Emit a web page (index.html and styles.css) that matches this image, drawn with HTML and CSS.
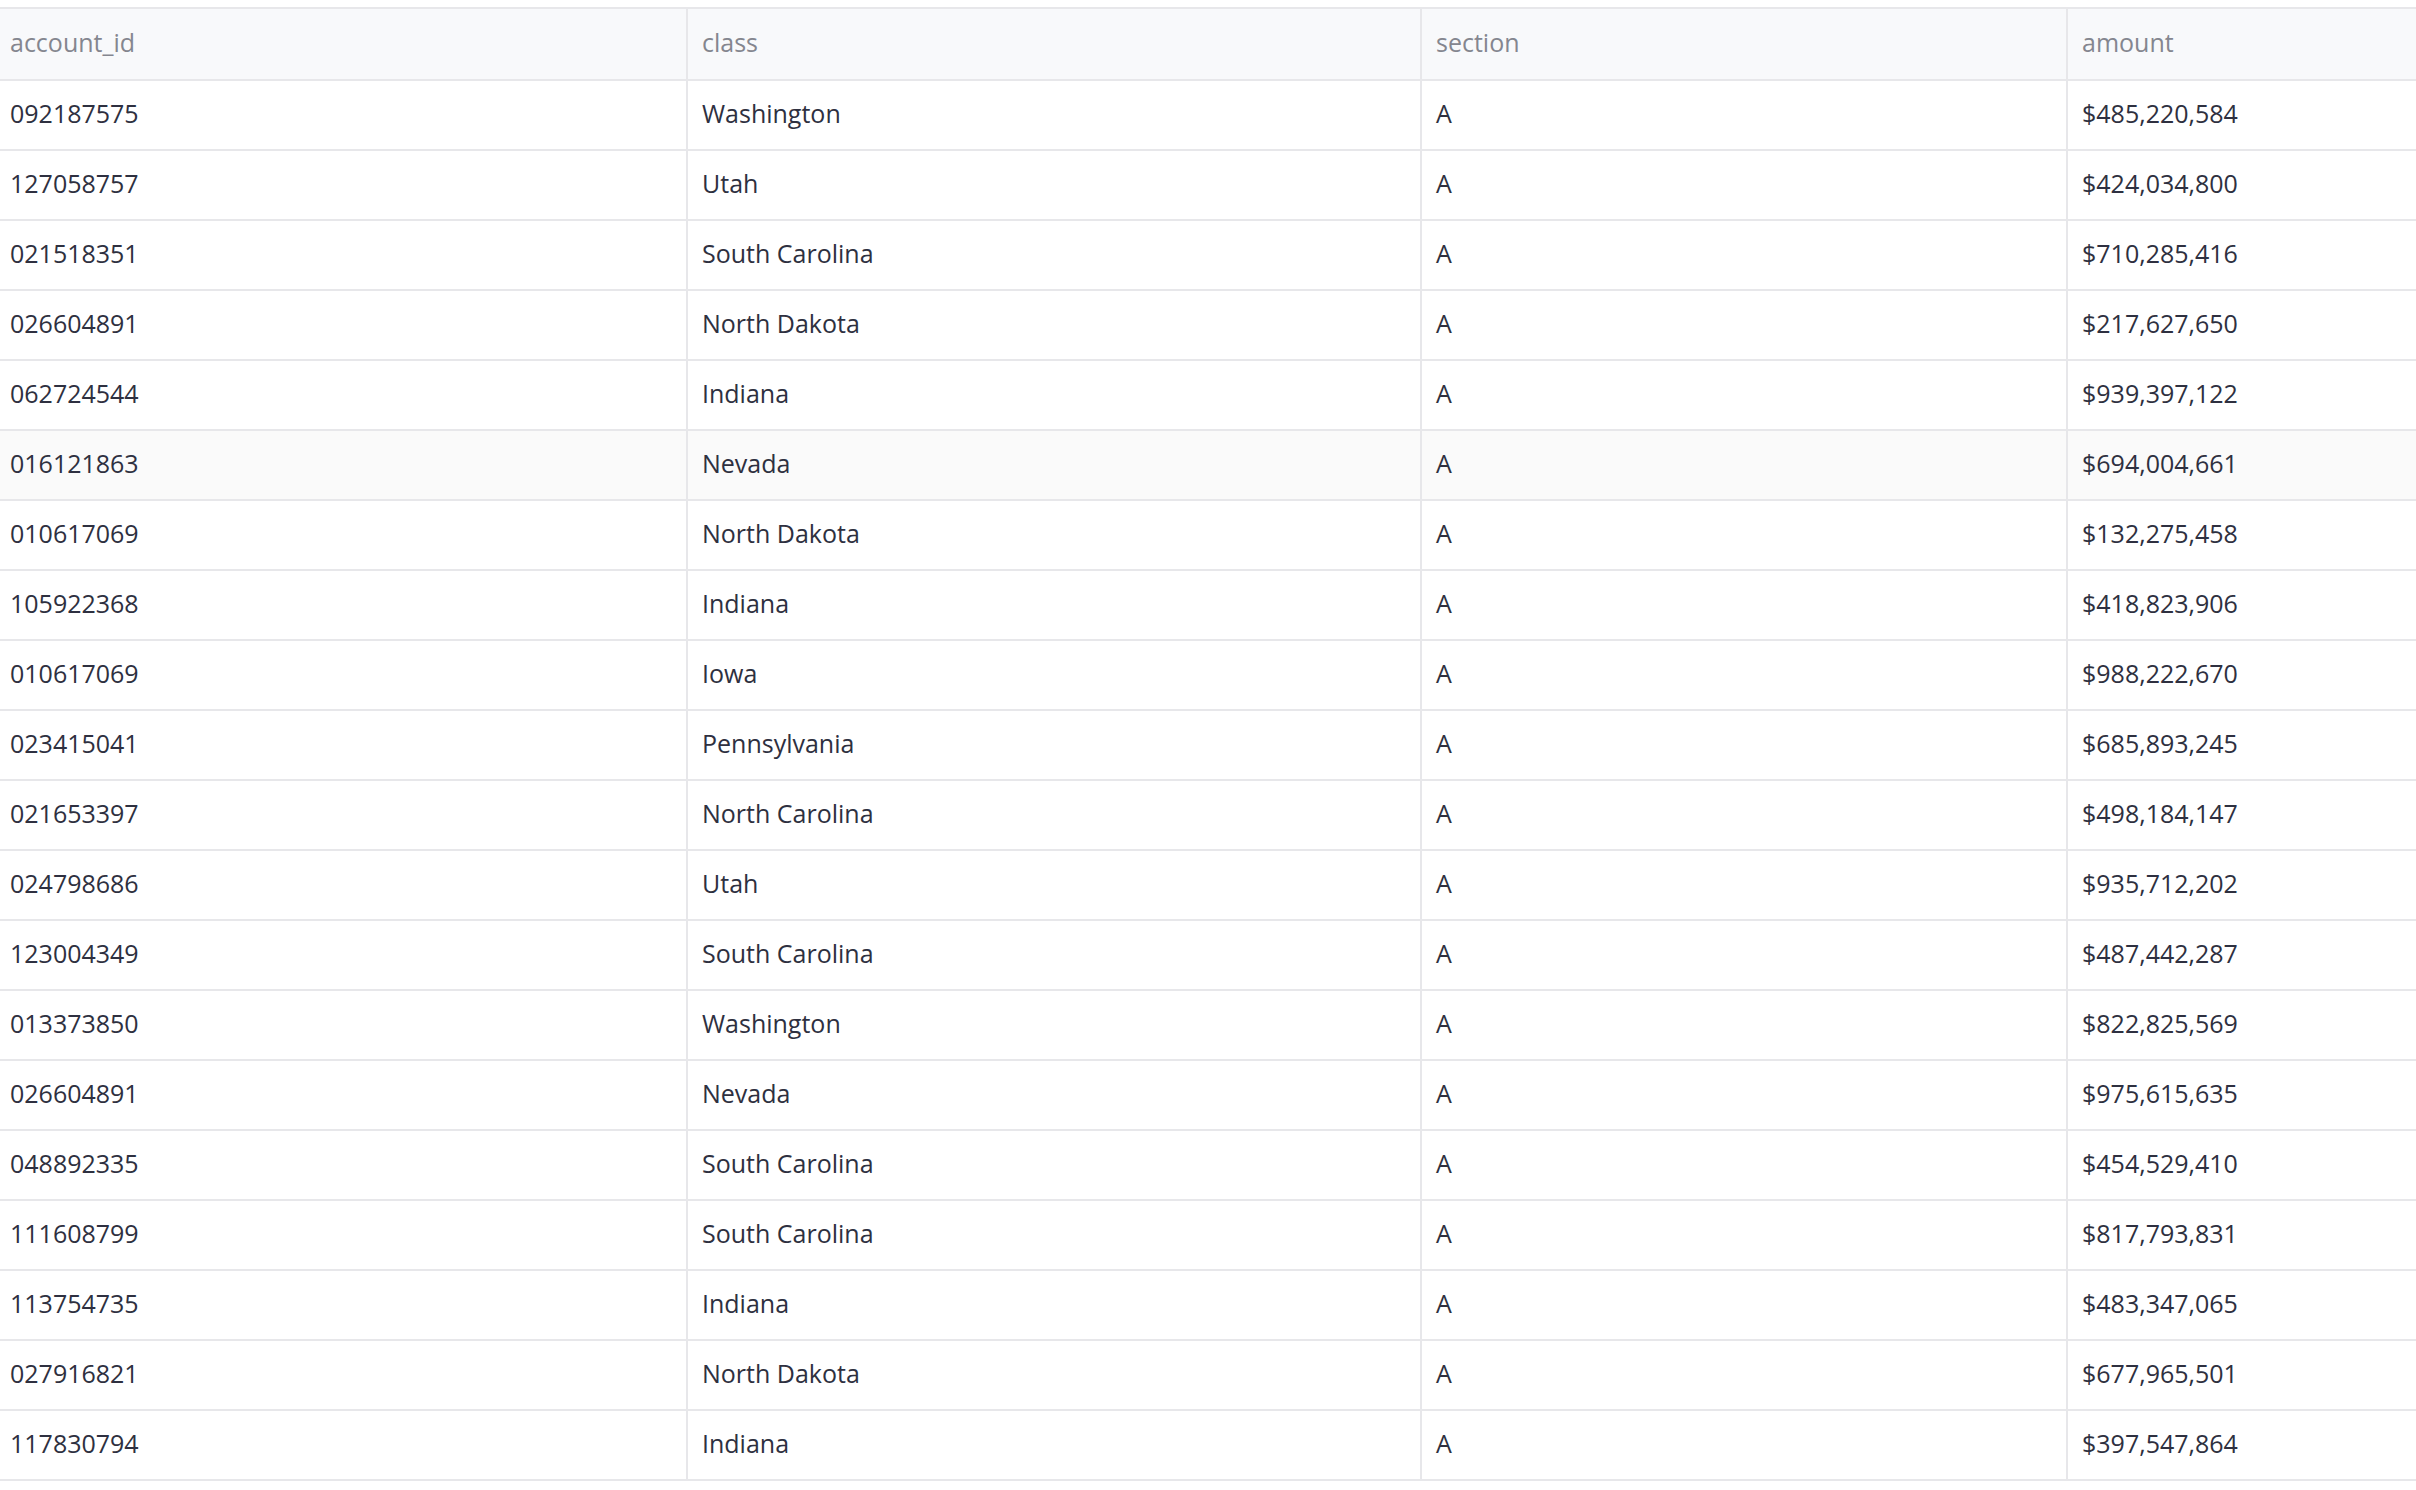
FILE: index.html
```html
<!DOCTYPE html>
<html lang="en">
<head>
<meta charset="utf-8">
<title>Accounts</title>
<link rel="stylesheet" href="styles.css">
</head>
<body>
<div class="grid" role="table">
  <div class="row head" role="row">
    <div class="cell" role="columnheader">account_id</div>
    <div class="cell" role="columnheader">class</div>
    <div class="cell" role="columnheader">section</div>
    <div class="cell" role="columnheader">amount</div>
  </div>
  <div class="row" role="row"><div class="cell">092187575</div><div class="cell">Washington</div><div class="cell">A</div><div class="cell">$485,220,584</div></div>
  <div class="row" role="row"><div class="cell">127058757</div><div class="cell">Utah</div><div class="cell">A</div><div class="cell">$424,034,800</div></div>
  <div class="row" role="row"><div class="cell">021518351</div><div class="cell">South Carolina</div><div class="cell">A</div><div class="cell">$710,285,416</div></div>
  <div class="row" role="row"><div class="cell">026604891</div><div class="cell">North Dakota</div><div class="cell">A</div><div class="cell">$217,627,650</div></div>
  <div class="row" role="row"><div class="cell">062724544</div><div class="cell">Indiana</div><div class="cell">A</div><div class="cell">$939,397,122</div></div>
  <div class="row is-hover" role="row"><div class="cell">016121863</div><div class="cell">Nevada</div><div class="cell">A</div><div class="cell">$694,004,661</div></div>
  <div class="row" role="row"><div class="cell">010617069</div><div class="cell">North Dakota</div><div class="cell">A</div><div class="cell">$132,275,458</div></div>
  <div class="row" role="row"><div class="cell">105922368</div><div class="cell">Indiana</div><div class="cell">A</div><div class="cell">$418,823,906</div></div>
  <div class="row" role="row"><div class="cell">010617069</div><div class="cell">Iowa</div><div class="cell">A</div><div class="cell">$988,222,670</div></div>
  <div class="row" role="row"><div class="cell">023415041</div><div class="cell">Pennsylvania</div><div class="cell">A</div><div class="cell">$685,893,245</div></div>
  <div class="row" role="row"><div class="cell">021653397</div><div class="cell">North Carolina</div><div class="cell">A</div><div class="cell">$498,184,147</div></div>
  <div class="row" role="row"><div class="cell">024798686</div><div class="cell">Utah</div><div class="cell">A</div><div class="cell">$935,712,202</div></div>
  <div class="row" role="row"><div class="cell">123004349</div><div class="cell">South Carolina</div><div class="cell">A</div><div class="cell">$487,442,287</div></div>
  <div class="row" role="row"><div class="cell">013373850</div><div class="cell">Washington</div><div class="cell">A</div><div class="cell">$822,825,569</div></div>
  <div class="row" role="row"><div class="cell">026604891</div><div class="cell">Nevada</div><div class="cell">A</div><div class="cell">$975,615,635</div></div>
  <div class="row" role="row"><div class="cell">048892335</div><div class="cell">South Carolina</div><div class="cell">A</div><div class="cell">$454,529,410</div></div>
  <div class="row" role="row"><div class="cell">111608799</div><div class="cell">South Carolina</div><div class="cell">A</div><div class="cell">$817,793,831</div></div>
  <div class="row" role="row"><div class="cell">113754735</div><div class="cell">Indiana</div><div class="cell">A</div><div class="cell">$483,347,065</div></div>
  <div class="row" role="row"><div class="cell">027916821</div><div class="cell">North Dakota</div><div class="cell">A</div><div class="cell">$677,965,501</div></div>
  <div class="row" role="row"><div class="cell">117830794</div><div class="cell">Indiana</div><div class="cell">A</div><div class="cell">$397,547,864</div></div>
</div>
</body>
</html>
```

FILE: styles.css
```css
html, body {
  margin: 0;
  padding: 0;
  background: #ffffff;
}

body {
  overflow: hidden;
  font-family: "Open Sans", "Noto Sans", "Liberation Sans", sans-serif;
  font-size: 25px;
  color: #2e3040;
}

.grid {
  width: 2416px;
  margin-top: 7px;
  border-top: 2px solid #e7e7ea;
}

.row {
  display: grid;
  grid-template-columns: 688px 734px 646px 1fr;
  height: 70px;
  box-sizing: border-box;
  border-bottom: 2px solid #e7e7ea;
  background: #ffffff;
}

.row.head {
  height: 72px;
  background: #f8f9fb;
  color: #84868f;
}

.row.is-hover {
  background: #fafafa;
}

.cell {
  display: flex;
  align-items: center;
  padding-left: 14px;
  padding-bottom: 5px;
  box-sizing: border-box;
  border-right: 2px solid #e7e7ea;
  white-space: nowrap;
  overflow: hidden;
}

.cell:first-child {
  padding-left: 10px;
}

.cell:last-child {
  border-right: none;
}
```
